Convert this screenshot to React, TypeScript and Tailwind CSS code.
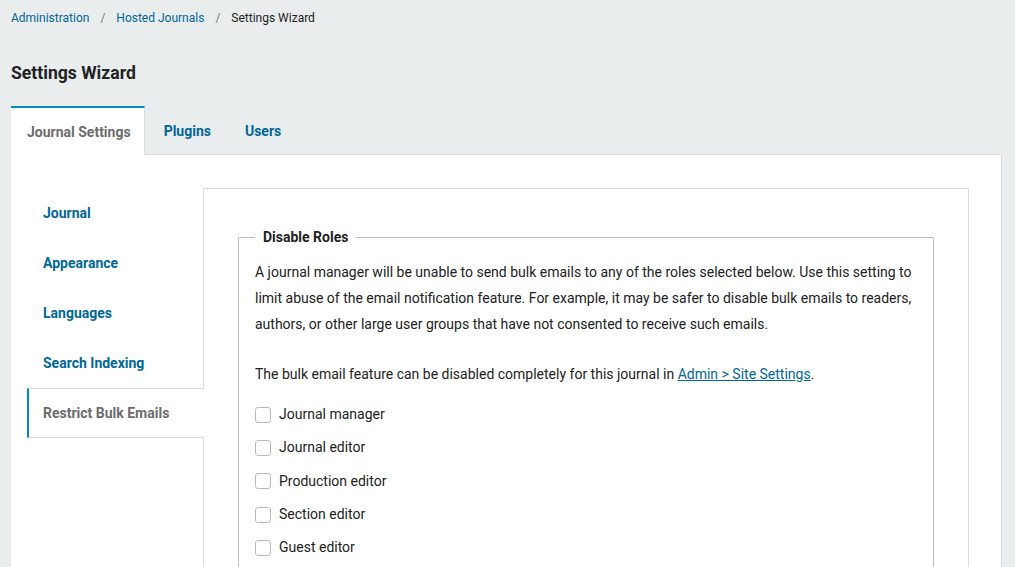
import * as React from "react";

const navItems = [
  "Journal",
  "Appearance",
  "Languages",
  "Search Indexing",
  "Restrict Bulk Emails",
];

const roles = [
  "Journal manager",
  "Journal editor",
  "Production editor",
  "Section editor",
  "Guest editor",
];

const App = () => {
  const active = "Restrict Bulk Emails";

  return (
    <div className="min-h-screen bg-[#eaedee] pl-[11px] pr-[13px] font-['Roboto',sans-serif] text-[#222]">
      {/* Breadcrumb */}
      <nav className="flex items-center h-[35px] text-[12px]">
        <a className="text-[#006798]">Administration</a>
        <span className="mx-[11px] text-[#777]">/</span>
        <a className="text-[#006798]">Hosted Journals</a>
        <span className="mx-[11px] text-[#777]">/</span>
        <span>Settings Wizard</span>
      </nav>

      <h1 className="flex items-center h-[71px] pt-[6px] text-[17.6px] font-bold">
        Settings Wizard
      </h1>

      {/* Tabs */}
      <div className="flex h-[49px] text-[14px] font-bold">
        <div className="flex items-center pt-[1px] pl-[16px] pr-[13px] bg-white border-t-2 border-[#008acb] border-r border-r-[#ddd] text-[#6c6c6c]">
          Journal Settings
        </div>
        <div className="flex items-center pt-[1px] ml-[3px] px-4 text-[#006798]">Plugins</div>
        <div className="flex items-center pt-[1px] ml-[2px] px-4 text-[#006798]">Users</div>
      </div>

      {/* Panel */}
      <div className="bg-white border-r border-[#ddd] -mt-px border-t pl-[16px] pr-[32px] pt-[33px] h-[420px]">
        <div className="flex h-full">
          {/* Side nav */}
          <div className="w-[176px] shrink-0 text-[14px] font-bold">
            {navItems.map((item) =>
              item === active ? (
                <div
                  key={item}
                  className="relative z-10 -mr-px flex items-center h-[50px] pl-[14px] bg-white border-l-2 border-[#008acb] border-y border-y-[#ddd] text-[#6c6c6c]"
                >
                  {item}
                </div>
              ) : (
                <div
                  key={item}
                  className="flex items-center h-[50px] pl-[16px] text-[#006798]"
                >
                  {item}
                </div>
              )
            )}
          </div>

          {/* Content */}
          <div className="flex-1 border border-[#ddd] px-[34px] pt-[34px] border-b-0">
            <fieldset className="border border-[#bbb] px-[16px] pb-4 rounded-[1px]">
              <legend className="px-2 text-[14px] font-bold leading-[28px]">
                Disable Roles
              </legend>
              <p className="text-[14px] leading-[26px] mt-[8px]">
                A journal manager will be unable to send bulk emails to any of
                the roles selected below. Use this setting to limit abuse of the
                email notification feature. For example, it may be safer to
                disable bulk emails to readers, authors, or other large user
                groups that have not consented to receive such emails.
              </p>
              <p className="text-[14px] leading-[26px] mt-[24px]">
                The bulk email feature can be disabled completely for this
                journal in{" "}
                <a className="text-[#006798] underline">Admin &gt; Site Settings</a>
                .
              </p>
              <div className="mt-[11px]">
                {roles.map((role) => (
                  <label
                    key={role}
                    className="flex items-center gap-2 h-[33.33px] text-[14px]"
                  >
                    <span className="w-4 h-4 border border-[#bbb] rounded-[3px] bg-white" />
                    {role}
                  </label>
                ))}
              </div>
            </fieldset>
          </div>
        </div>
      </div>
    </div>
  );
};

export default App;
